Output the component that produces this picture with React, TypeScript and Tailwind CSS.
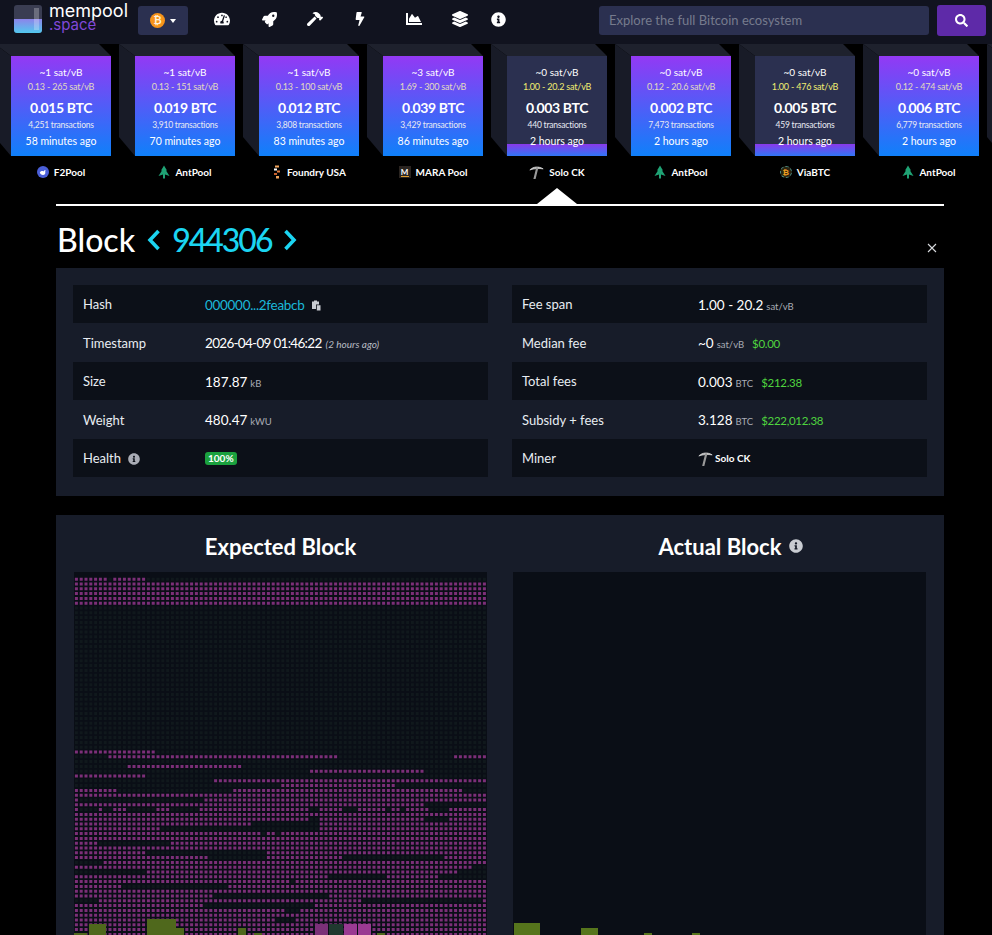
import React from "react";
import {
  FaBolt,
  FaChartArea,
  FaHammer,
  FaInfoCircle,
  FaLayerGroup,
  FaRocket,
  FaSearch,
  FaTachometerAlt,
} from "react-icons/fa";

const blocks = [
  { fee: "~1 sat/vB", span: "0.13 - 265 sat/vB", btc: "0.015 BTC", txs: "4,251 transactions", ago: "58 minutes ago", pool: "F2Pool", full: true },
  { fee: "~1 sat/vB", span: "0.13 - 151 sat/vB", btc: "0.019 BTC", txs: "3,910 transactions", ago: "70 minutes ago", pool: "AntPool", full: true },
  { fee: "~1 sat/vB", span: "0.13 - 100 sat/vB", btc: "0.012 BTC", txs: "3,808 transactions", ago: "83 minutes ago", pool: "Foundry USA", full: true },
  { fee: "~3 sat/vB", span: "1.69 - 300 sat/vB", btc: "0.039 BTC", txs: "3,429 transactions", ago: "86 minutes ago", pool: "MARA Pool", full: true },
  { fee: "~0 sat/vB", span: "1.00 - 20.2 sat/vB", btc: "0.003 BTC", txs: "440 transactions", ago: "2 hours ago", pool: "Solo CK", full: false },
  { fee: "~0 sat/vB", span: "0.12 - 20.6 sat/vB", btc: "0.002 BTC", txs: "7,473 transactions", ago: "2 hours ago", pool: "AntPool", full: true },
  { fee: "~0 sat/vB", span: "1.00 - 476 sat/vB", btc: "0.005 BTC", txs: "459 transactions", ago: "2 hours ago", pool: "ViaBTC", full: false },
  { fee: "~0 sat/vB", span: "0.12 - 474 sat/vB", btc: "0.006 BTC", txs: "6,779 transactions", ago: "2 hours ago", pool: "AntPool", full: true },
];

const Pickaxe = ({ size = 15 }: { size?: number }) => (
  <svg width={size} height={size} viewBox="0 0 14 14" fill="none">
    <path d="M0.8 4.6C4 1.4 9 1 13.2 3.6C9.5 3 4.5 3.2 0.8 4.6Z" fill="#d0d0d0" stroke="#d0d0d0" strokeWidth="0.8" />
    <path d="M7.6 3L5 13.6" stroke="#999" strokeWidth="2" strokeLinecap="round" />
  </svg>
);

const PoolIcon = ({ pool }: { pool: string }) => {
  if (pool === "F2Pool")
    return (
      <svg width="12" height="12" viewBox="0 0 12 12">
        <circle cx="6" cy="6" r="6" fill="#4a5fd8" />
        <path d="M2.8 6.5C4 5 5.5 4.8 6.5 5.5C7 4.5 7.8 4 8.6 4.2L8.2 5.8C8.8 7.4 7.8 9 6 9C4.4 9 3.2 8 2.8 6.5Z" fill="#fff" />
      </svg>
    );
  if (pool === "AntPool")
    return (
      <svg width="12" height="14" viewBox="0 0 12 14">
        <path d="M6 0.5L9 5.5H8L11.5 11L7 9.4V13.5H5V9.4L0.5 11L4 5.5H3Z" fill="#1fa274" />
      </svg>
    );
  if (pool === "Foundry USA")
    return (
      <svg width="10" height="14" viewBox="0 0 10 14">
        <rect x="3" y="0.5" width="4" height="2" fill="#f0a35c" />
        <rect x="2" y="3.5" width="3" height="2" fill="#fff" />
        <rect x="5" y="5.5" width="3" height="2" fill="#e2793a" />
        <rect x="2" y="8" width="3" height="2" fill="#c9602c" />
        <rect x="4" y="11" width="3" height="2.5" fill="#f0a35c" />
      </svg>
    );
  if (pool === "MARA Pool")
    return (
      <span className="flex h-[12px] w-[12px] flex-col items-center justify-center bg-[#2a2420] text-[8px] font-bold leading-[8px] text-white">
        M<span className="h-[1px] w-[8px] bg-[#e0a030]" />
      </span>
    );
  if (pool === "ViaBTC")
    return (
      <span className="flex h-[12px] w-[12px] items-center justify-center rounded-full border border-dashed border-[#4f8f86] bg-[#2a2412] text-[8px] font-bold leading-none text-[#f0a020]">
        ₿
      </span>
    );
  return <Pickaxe />;
};

const Block = ({ b }: { b?: (typeof blocks)[number] }) => (
  <div className="relative w-[100px] shrink-0">
    {/* 3d faces */}
    <svg className="absolute left-[-16px] top-[-12px]" width="116" height="112" viewBox="0 0 116 112">
      <path d="M0 0H104L116 12H16Z" fill="#1e212d" />
      <path d="M0 0L16 12V112L0 93Z" fill="#181b27" />
    </svg>
    {b && (
      <>
        <div
          className={`relative flex h-[100px] flex-col items-center pt-[9px] text-white ${
            b.full ? "bg-linear-to-b/srgb from-[#9339f4] to-[#0f80fa]" : "bg-[#2b3050]"
          }`}
        >
          {!b.full && (
            <div className="absolute bottom-0 left-0 h-[12px] w-full bg-linear-to-b/srgb from-[#8a39ec] to-[#2f76f5]" />
          )}
          <div className="relative text-[10px] leading-[14px]">{b.fee}</div>
          <div className={`relative text-[9px] leading-[16px] tracking-[-0.2px] ${b.full ? "text-[#e4d9c0]" : "text-[#f2ee70]"}`}>{b.span}</div>
          <div className="relative mt-[3px] text-[14px] font-bold leading-[20px] tracking-[-0.4px]">{b.btc}</div>
          <div className="relative text-[8.5px] leading-[14px] tracking-[-0.2px] text-[#e8eaf2]">{b.txs}</div>
          <div className="relative mt-[1px] text-[10.5px] leading-[16px]">{b.ago}</div>
        </div>
        <div className="mt-[9px] flex h-[14px] items-center justify-center gap-[5px] whitespace-nowrap text-[10px] font-bold text-white">
          <PoolIcon pool={b.pool} />
          {b.pool}
        </div>
      </>
    )}
  </div>
);

const Unit = ({ children }: { children: React.ReactNode }) => (
  <span className="ml-[3px] text-[9.5px] text-[#a9acb5]">{children}</span>
);
const Usd = ({ children }: { children: React.ReactNode }) => (
  <span className="ml-[8px] text-[11.5px] tracking-[-0.3px] text-[#4fd43f]">{children}</span>
);

const Row = ({ odd, label, valueX, children }: { odd: boolean; label: React.ReactNode; valueX: string; children: React.ReactNode }) => (
  <div className={`flex h-[38.4px] items-center px-[10px] pt-[2px] ${odd ? "bg-[#0c1018]" : ""}`}>
    <div className={`${valueX} flex shrink-0 items-center text-[13px] text-[#e8edf2]`}>{label}</div>
    <div className="flex items-baseline whitespace-nowrap text-[13.5px] text-white">{children}</div>
  </div>
);

// measured off the reference at 3x: [zoomed y, zoomed x start, zoomed x end]
const darkBands = [
  [30, 170, 515], [60, 60, 430], [75, 1085, 1280], [95, 60, 110], [95, 130, 150], [95, 200, 285],
  [95, 330, 420], [95, 750, 780], [95, 850, 890], [95, 970, 990], [95, 1020, 1040], [95, 1100, 1160],
  [115, 750, 780], [115, 1090, 1160], [130, 570, 770], [145, 300, 770], [160, 600, 620], [160, 640, 660],
  [190, 110, 325], [218, 260, 620], [232, 445, 620], [232, 850, 1150], [246, 45, 130], [260, 1230, 1280],
  [275, 45, 255], [275, 1200, 1280], [290, 810, 975], [290, 1140, 1280], [305, 690, 710], [320, 190, 500],
  [348, 465, 805], [362, 45, 110], [362, 905, 1260], [378, 430, 760], [392, 670, 720], [420, 650, 700],
];

// pink runs in the otherwise dark part, by row: [row, x start, x end]
const pinkRuns = [
  [1, 1, 34], [1, 39, 71], [2, 0, 413], [3, 0, 413], [4, 0, 413], [5, 0, 413], [6, 0, 413],
  [37, 1, 81], [38, 34, 263], [38, 381, 413], [40, 54, 168], [41, 236, 349], [42, 1, 71],
  [43, 141, 413], [44, 208, 321], [45, 1, 41], [45, 159, 389],
];

const PITCH = 4.8;
const cell = (r: number, c: number) => `M${(c * PITCH + 0.9).toFixed(1)} ${(r * PITCH + 0.9).toFixed(1)}h3v3h-3z`;

const buildMosaic = () => {
  let pink = "";
  let dark = "";
  for (let r = 1; r < 76; r++) {
    for (let c = 0; c < 86; c++) {
      const x = c * PITCH + 2;
      let isPink = false;
      if (r < 46) {
        isPink = pinkRuns.some(([row, a, b]) => row === r && x >= a && x <= b);
      } else {
        isPink = !darkBands.some(([zy, a, b]) => {
          const row = Math.floor((208 + zy / 3) / PITCH);
          return row === r && x >= a / 3 - 14 && x <= b / 3 - 14;
        });
      }
      if (isPink) pink += cell(r, c);
      else dark += cell(r, c);
    }
  }
  return { pink, dark };
};

const mosaic = buildMosaic();

const ExpectedBlock = () => (
  <svg width="413" height="363" viewBox="0 0 413 363" className="block bg-[#0a0e16]">
    <path d={mosaic.dark} fill="#10181c" />
    <path d={mosaic.pink} fill="#7c2f78" />
    <rect x="0" y="361" width="13" height="2" fill="#4f681c" />
    <rect x="15" y="352" width="17" height="11" fill="#4f681c" />
    <rect x="73" y="347" width="29" height="16" fill="#4f681c" />
    <rect x="102" y="356" width="8" height="7" fill="#4f681c" />
    <rect x="164" y="356" width="8" height="7" fill="#4f681c" />
    <rect x="180" y="361" width="8" height="2" fill="#4f681c" />
    <rect x="241" y="352" width="13" height="11" fill="#7b3078" />
    <rect x="255" y="352" width="14" height="11" fill="#20392f" />
    <rect x="270" y="352" width="13" height="11" fill="#9a3a92" />
    <rect x="284" y="352" width="13" height="11" fill="#9a3a92" />
    <rect x="303" y="361" width="8" height="2" fill="#4f681c" />
  </svg>
);

const ActualBlock = () => (
  <svg width="413" height="363" viewBox="0 0 413 363" className="block bg-[#0a0e16]">
    <rect x="1" y="351" width="26" height="12" fill="#56751c" />
    <rect x="68" y="356" width="17" height="7" fill="#56751c" />
    <rect x="131" y="361" width="8" height="2" fill="#56751c" />
    <rect x="179" y="361" width="8" height="2" fill="#56751c" />
  </svg>
);

export default function App() {
  return (
    <div className="h-[935px] w-[992px] overflow-hidden bg-black font-['Lato',sans-serif]">
      {/* Navbar */}
      <div className="flex h-[44px] items-start bg-[#11131f]">
        <div className="relative ml-[14px] mt-[5px] flex h-[28px] w-[28px] flex-col overflow-hidden rounded-[3px] bg-[#3a3d52]">
          <div className="h-[14px] shrink-0" />
          <div className="flex-1 bg-linear-to-b/srgb from-[#8d84ea] to-[#52c8ee]" />
          <div className="absolute left-[20px] top-[3px] h-[22px] w-[5px] bg-white/25" />
        </div>
        <div className="ml-[7px] mt-[3px] font-['Inter',sans-serif] leading-none">
          <div className="h-[15px] text-[18px] leading-[15px] text-white">mempool</div>
          <div className="h-[14px] text-[15px] leading-[14px] text-[#8048d8]">.space</div>
        </div>
        <div className="ml-[10px] mt-[6px] flex h-[29px] w-[50px] items-center justify-center gap-[5px] rounded-[3px] bg-[#2b3050]">
          <span className="flex h-[15px] w-[15px] items-center justify-center rounded-full bg-[#f7931a] text-[10px] font-bold text-[#fff0d8]">₿</span>
          <span className="h-0 w-0 border-x-[3.5px] border-t-[4px] border-x-transparent border-t-white" />
        </div>
        <div className="ml-[26px] mt-[11px] flex items-center text-white">
          <FaTachometerAlt className="h-[16px] w-[16px]" />
          <FaRocket className="ml-[32px] h-[15px] w-[15px]" />
          <FaHammer className="ml-[30px] h-[16px] w-[16px]" />
          <FaBolt className="ml-[30px] h-[14px] w-[14px]" />
          <FaChartArea className="ml-[39px] h-[16px] w-[16px]" />
          <FaLayerGroup className="ml-[30px] h-[16px] w-[16px]" />
          <FaInfoCircle className="ml-[23px] h-[15px] w-[15px]" />
        </div>
        <div className="ml-auto mt-[6px] flex h-[29px] w-[330px] items-center rounded-[3px] bg-[#2b3050] pl-[10px] pt-[1px] text-[13px] text-[#767b8d]">
          Explore the full Bitcoin ecosystem
        </div>
        <div className="ml-[8px] mr-[6px] mt-[5px] flex h-[31px] w-[49px] items-center justify-center rounded-[3px] bg-[#5e2aa8] text-white">
          <FaSearch className="h-[13px] w-[13px]" />
        </div>
      </div>

      {/* Blockchain strip */}
      <div className="flex gap-[24px] overflow-hidden pl-[11px] pt-[12px]">
        {blocks.map((b, i) => (
          <Block key={i} b={b} />
        ))}
        <Block />
      </div>

      {/* Selected block marker */}
      <div className="relative ml-[56px] mt-[9px] h-[16px] w-[888px]">
        <div className="absolute bottom-0 left-[481px] h-0 w-0 border-x-[20px] border-b-[16px] border-x-transparent border-b-white" />
      </div>
      <div className="ml-[56px] h-[2px] w-[888px] bg-white" />

      <div className="ml-[56px] w-[888px]">
        {/* Title */}
        <div className="flex h-[62px] items-center pt-[5px] text-[#1bd5f2]">
          <span className="ml-[1px] text-[32px] font-medium text-white">Block</span>
          <svg className="ml-[12px]" width="14" height="22" viewBox="0 0 14 22" fill="none">
            <path d="M11.5 2L3 11L11.5 20" stroke="#1bd5f2" strokeWidth="3.6" />
          </svg>
          <span className="ml-[11px] text-[32px] font-medium tracking-[-2px]">944306</span>
          <svg className="ml-[11px]" width="14" height="22" viewBox="0 0 14 22" fill="none">
            <path d="M2.5 2L11 11L2.5 20" stroke="#1bd5f2" strokeWidth="3.6" />
          </svg>
          <svg className="ml-auto mr-[7px] mt-[16px]" width="10" height="10" viewBox="0 0 10 10" fill="none">
            <path d="M1 1L9 9M9 1L1 9" stroke="#d8dade" strokeWidth="1.1" />
          </svg>
        </div>

        {/* Details */}
        <div className="grid h-[228px] grid-cols-2 gap-[24px] bg-[#171c29] px-[17px] pt-[17px]">
          <div>
            <Row odd valueX="w-[122px]" label="Hash">
              <span className="tracking-[-0.3px] text-[#1bb8d8]">000000...2feabcb</span>
              <svg className="ml-[7px] self-center" width="10" height="11" viewBox="0 0 10 11" fill="#c9ccd2">
                <path d="M1 1.5h2V.5h3v1h2v3H5v4.5H1zM5.8 5.2H9.5V10.5H5.8z" />
              </svg>
            </Row>
            <Row odd={false} valueX="w-[122px]" label="Timestamp">
              <span className="tracking-[-0.7px]">2026-04-09 01:46:22</span>
              <span className="ml-[4px] text-[10px] italic text-[#b9bcc4]">(2 hours ago)</span>
            </Row>
            <Row odd valueX="w-[122px]" label="Size">
              187.87<Unit>kB</Unit>
            </Row>
            <Row odd={false} valueX="w-[122px]" label="Weight">
              480.47<Unit>kWU</Unit>
            </Row>
            <Row
              odd
              valueX="w-[122px]"
              label={
                <>
                  Health
                  <FaInfoCircle className="ml-[7px] h-[12px] w-[12px] text-[#a9acb5]" />
                </>
              }
            >
              <span className="rounded-[3px] bg-[#1ba13e] px-[3px] text-[10px] font-bold leading-[13px] text-white">100%</span>
            </Row>
          </div>
          <div>
            <Row odd valueX="w-[176px]" label="Fee span">
              1.00 - 20.2<Unit>sat/vB</Unit>
            </Row>
            <Row odd={false} valueX="w-[176px]" label="Median fee">
              ~0<Unit>sat/vB</Unit>
              <Usd>$0.00</Usd>
            </Row>
            <Row odd valueX="w-[176px]" label="Total fees">
              0.003<Unit>BTC</Unit>
              <Usd>$212.38</Usd>
            </Row>
            <Row odd={false} valueX="w-[176px]" label="Subsidy + fees">
              3.128<Unit>BTC</Unit>
              <Usd>$222,012.38</Usd>
            </Row>
            <Row odd valueX="w-[176px]" label="Miner">
              <span className="flex items-center gap-[2px] text-[10px] font-bold">
                <Pickaxe />
                Solo CK
              </span>
            </Row>
          </div>
        </div>

        {/* Overview */}
        <div className="mt-[19px] grid grid-cols-2 gap-[26px] bg-[#171c29] px-[18px] pb-[40px]">
          <div>
            <div className="flex h-[57px] items-center justify-center pt-[5px] text-[22px] font-bold text-white">Expected Block</div>
            <ExpectedBlock />
          </div>
          <div>
            <div className="flex h-[57px] items-center justify-center gap-[8px] pl-[23px] pt-[5px] text-[22px] font-bold text-white">
              Actual Block
              <FaInfoCircle className="h-[14px] w-[14px] text-[#c9ccd2]" />
            </div>
            <ActualBlock />
          </div>
        </div>
      </div>
    </div>
  );
}
